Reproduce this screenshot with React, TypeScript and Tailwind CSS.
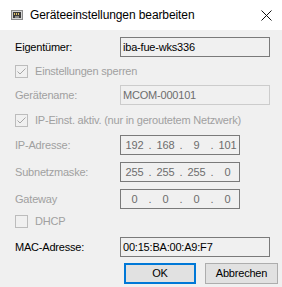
import React from 'react';

const font = { fontFamily: '"Liberation Sans", Arial, sans-serif' };

const Check = ({ checked }: { checked: boolean }) => (
  <div className="w-[13px] h-[13px] border border-[#bcbcbc] bg-[#f0f0f0] flex items-center justify-center shrink-0">
    {checked && (
      <svg width="11" height="11" viewBox="0 0 11 11">
        <path d="M1.5 5.5 L4 8 L9.5 2.5" fill="none" stroke="#a6a6a6" strokeWidth="1" />
      </svg>
    )}
  </div>
);

const IpBox = ({ parts }: { parts: string[] }) => (
  <div className="w-[120px] h-[20px] border border-[#7a7a7a] bg-[#f0f0f0] flex items-center pl-[2px] text-[#6d6d6d]">
    {parts.map((p, i) => (
      <React.Fragment key={i}>
        {i > 0 && <span className="w-[8px] text-center">.</span>}
        <span className="w-[23px] text-center">{p}</span>
      </React.Fragment>
    ))}
  </div>
);

export default function App() {
  return (
    <div
      className="w-[282px] h-[287px] bg-white flex flex-col text-[11px] tracking-[-0.2px] text-black overflow-hidden"
      style={font}
    >
      {/* Title bar */}
      <div className="h-[30px] flex items-center shrink-0 bg-white">
        <svg className="ml-[11px]" width="12" height="10" viewBox="0 0 12 10">
          <rect x="0.5" y="0.5" width="11" height="9" fill="#d4d4d4" stroke="#8c8c8c" />
          <rect x="2" y="2" width="8" height="6" fill="#3b3b3b" />
          <rect x="3" y="3" width="1" height="2" fill="#e2c36a" />
          <rect x="5" y="3" width="1" height="2" fill="#e2c36a" />
          <rect x="7" y="3" width="1" height="2" fill="#e2c36a" />
          <rect x="4" y="6" width="4" height="2" fill="#8c8c8c" />
        </svg>
        <span className="ml-[7px] text-[12px] tracking-[-0.1px]">Geräteeinstellungen bearbeiten</span>
        <svg className="ml-auto mr-[10px]" width="11" height="11" viewBox="0 0 11 11">
          <path d="M0.5 0.5 L10.5 10.5 M10.5 0.5 L0.5 10.5" stroke="#111" strokeWidth="1" />
        </svg>
      </div>

      {/* Body */}
      <div className="flex-1 bg-[#f0f0f0] flex flex-col pl-[15px]">
        <div className="mt-[7px] h-[20px] flex items-center">
          <span className="w-[105px]">Eigentümer:</span>
          <div className="w-[150px] h-[20px] border border-[#7a7a7a] bg-[#f0f0f0] flex items-center pl-[2px]">
            iba-fue-wks336
          </div>
        </div>

        <div className="mt-[8px] h-[13px] flex items-center gap-[7px] text-[#a0a0a0]">
          <Check checked />
          <span>Einstellungen sperren</span>
        </div>

        <div className="mt-[7px] h-[20px] flex items-center">
          <span className="w-[105px] text-[#a0a0a0]">Gerätename:</span>
          <div className="w-[150px] h-[20px] border border-[#cccccc] bg-[#f0f0f0] flex items-center pl-[2px] text-[#6d6d6d]">
            MCOM-000101
          </div>
        </div>

        <div className="mt-[9px] h-[13px] flex items-center gap-[7px] text-[#a0a0a0]">
          <Check checked />
          <span>IP-Einst. aktiv. (nur in geroutetem Netzwerk)</span>
        </div>

        <div className="mt-[8px] h-[20px] flex items-center">
          <span className="w-[105px] text-[#a0a0a0]">IP-Adresse:</span>
          <IpBox parts={['192', '168', '9', '101']} />
        </div>

        <div className="mt-[7px] h-[20px] flex items-center">
          <span className="w-[105px] text-[#a0a0a0]">Subnetzmaske:</span>
          <IpBox parts={['255', '255', '255', '0']} />
        </div>

        <div className="mt-[7px] h-[20px] flex items-center">
          <span className="w-[105px] text-[#a0a0a0]">Gateway</span>
          <IpBox parts={['0', '0', '0', '0']} />
        </div>

        <div className="mt-[6px] h-[13px] flex items-center gap-[7px] text-[#a0a0a0]">
          <Check checked={false} />
          <span>DHCP</span>
        </div>

        <div className="mt-[9px] h-[20px] flex items-center">
          <span className="w-[105px]">MAC-Adresse:</span>
          <div className="w-[150px] h-[20px] border border-[#7a7a7a] bg-[#f0f0f0] flex items-center pl-[2px]">
            00:15:BA:00:A9:F7
          </div>
        </div>

        <div className="mt-[6px] h-[21px] flex items-center">
          <button className="ml-[109px] w-[72px] h-[21px] border-2 border-[#0078d7] bg-[#e1e1e1] flex items-center justify-center">
            OK
          </button>
          <button className="ml-[9px] w-[73px] h-[21px] border border-[#adadad] bg-[#e1e1e1] flex items-center justify-center">
            Abbrechen
          </button>
        </div>
      </div>
    </div>
  );
}
